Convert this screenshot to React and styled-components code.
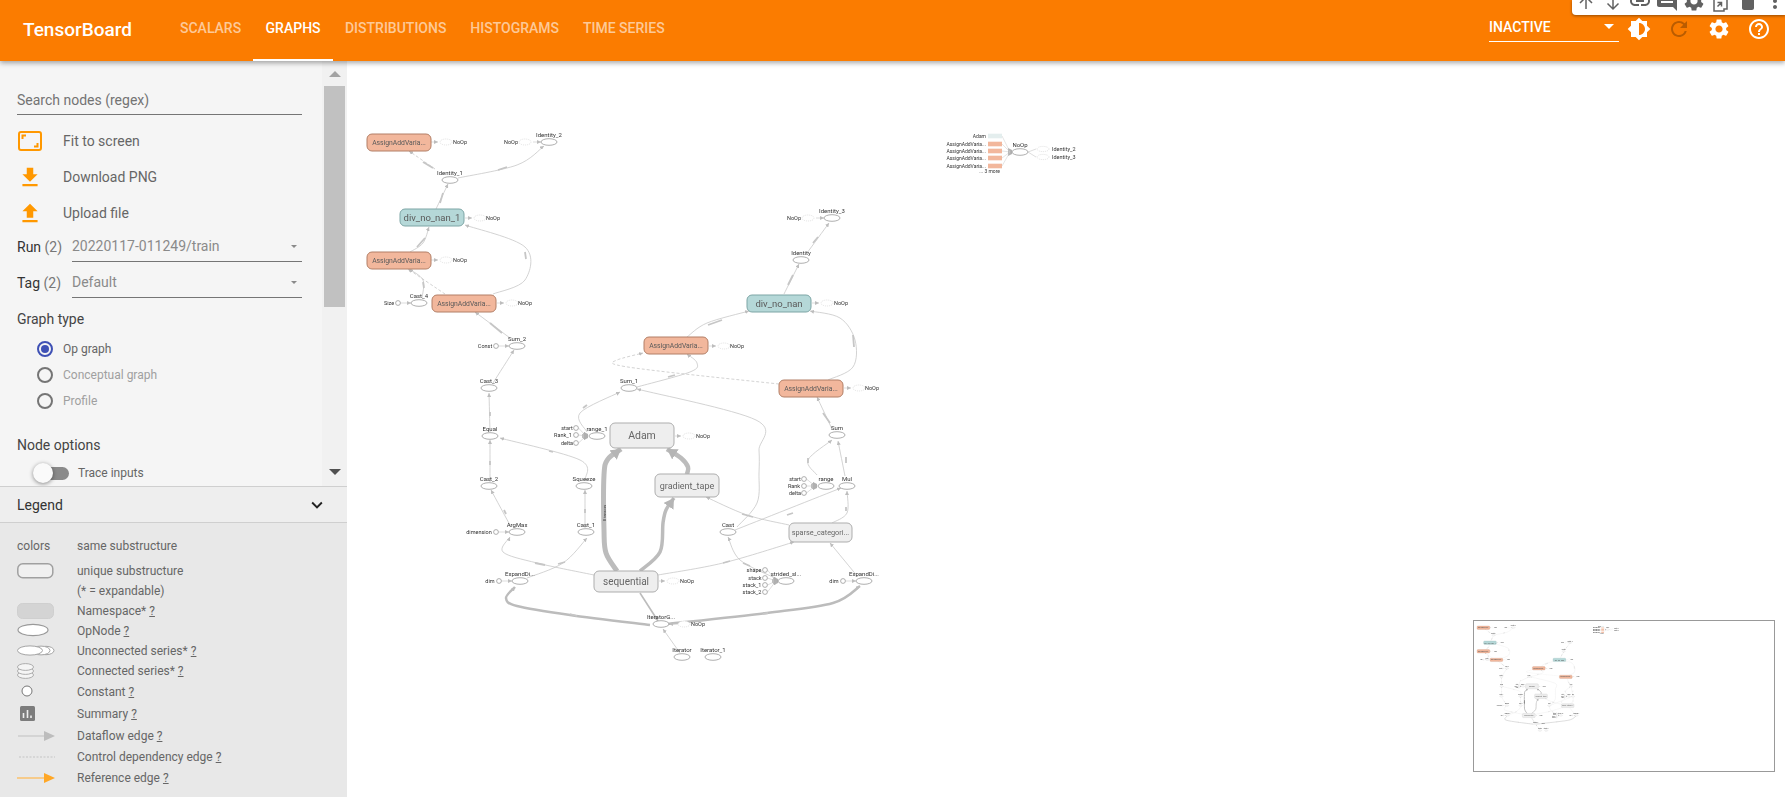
import React from 'react';
import styled, {createGlobalStyle} from 'styled-components';
import {
  MdLink, MdComment, MdSettings, MdDelete, MdMoreVert,
  MdBrightness6, MdRefresh, MdHelpOutline, MdFileDownload, MdFileUpload, MdKeyboardArrowDown,
} from 'react-icons/md';

const ORANGE = '#fb7c00';
const ICON_ORANGE = '#ff9800';

const GlobalStyle = createGlobalStyle`
  html, body {
    margin: 0;
    height: 100%;
    overflow: hidden;
    background: #fff;
    font-family: Roboto, "Liberation Sans", sans-serif;
  }
`;

const Page = styled.div`
  position: relative;
  display: flex;
  flex-direction: column;
  width: 1785px;
  height: 805px;
  overflow: hidden;
`;

/* ---------- header ---------- */

const Header = styled.header`
  position: relative;
  z-index: 2;
  display: flex;
  align-items: center;
  flex: none;
  height: 61px;
  padding: 0 6px 0 23px;
  background: ${ORANGE};
  box-shadow: 0 2px 5px rgba(0, 0, 0, 0.35);
  color: #fff;
`;

const Brand = styled.div`
  width: 145px;
  margin-bottom: 3px;
  font-size: 19px;
  font-weight: 500;
`;

const Tabs = styled.nav`
  display: flex;
  align-self: stretch;
  flex: 1;
`;

const Tab = styled.div`
  display: flex;
  align-items: center;
  box-sizing: border-box;
  padding: ${p => (p.$active ? '0 12.5px 3px' : '0 12px 3px')};
  margin-right: -0.1px;
  border-bottom: 2px solid ${p => (p.$active ? '#fff' : 'transparent')};
  color: ${p => (p.$active ? '#fff' : 'rgba(255, 255, 255, 0.6)')};
  font-size: 14px;
  font-weight: 500;
`;

const RunSelect = styled.div`
  display: flex;
  align-items: center;
  justify-content: space-between;
  box-sizing: border-box;
  width: 130px;
  height: 28px;
  margin-bottom: 6px;
  padding: 0 5px 1px 0;
  border-bottom: 1px solid #fff;
  font-size: 14px;
  font-weight: 500;
`;

const Caret = styled.span`
  width: 0;
  height: 0;
  border-left: ${p => p.$size || 5}px solid transparent;
  border-right: ${p => p.$size || 5}px solid transparent;
  border-top: ${p => p.$size || 5}px solid ${p => p.$color || '#fff'};
`;

const HeaderIcon = styled.div`
  display: flex;
  align-items: center;
  justify-content: center;
  width: 40px;
  margin-bottom: 3px;
  font-size: 24px;
  color: ${p => (p.$disabled ? 'rgba(0, 0, 0, 0.26)' : '#fff')};
`;

const CellToolbar = styled.div`
  position: absolute;
  z-index: 3;
  top: 0;
  right: 0;
  display: flex;
  box-sizing: border-box;
  width: 213px;
  height: 15px;
  padding-left: 1px;
  overflow: hidden;
  border-bottom-left-radius: 4px;
  background: #fff;
  box-shadow: 0 1px 3px rgba(0, 0, 0, 0.4);
`;

const CellTool = styled.div`
  display: flex;
  flex: none;
  justify-content: center;
  width: 26.9px;
  height: 24px;
  margin-top: -11px;
  font-size: 24px;
  color: #616161;
`;

/* ---------- sidebar ---------- */

const Main = styled.div`
  display: flex;
  flex: 1;
  min-height: 0;
`;

const Sidebar = styled.aside`
  display: flex;
  flex-direction: column;
  flex: none;
  width: 347px;
  height: 736px;
`;

const ScrollArea = styled.div`
  display: flex;
  flex: none;
  height: 425px;
  background: #f5f5f5;
`;

const Controls = styled.div`
  flex: 1;
  box-sizing: border-box;
  padding: 24px 20px 0 17px;
  overflow: hidden;
  color: #333;
  font-size: 14px;
`;

const Scrollbar = styled.div`
  display: flex;
  flex-direction: column;
  align-items: center;
  flex: none;
  box-sizing: border-box;
  width: 25px;
  padding: 0 2px;
  background: #f1f1f1;
`;

const ScrollCap = styled.div`
  display: flex;
  align-items: center;
  justify-content: center;
  flex: none;
  height: ${p => p.$height}px;
`;

const ScrollArrow = styled.span`
  width: 0;
  height: 0;
  border-left: 6px solid transparent;
  border-right: 6px solid transparent;
  ${p => (p.$up ? 'border-bottom: 6px solid #a3a3a3;' : 'border-top: 6px solid #505050;')}
`;

const ScrollThumb = styled.div`
  flex: none;
  width: 100%;
  height: 221px;
  background: #c1c1c1;
`;

const ScrollGap = styled.div`
  flex: 1;
`;

const SearchField = styled.div`
  display: flex;
  align-items: center;
  box-sizing: border-box;
  height: 30px;
  border-bottom: 1px solid #757575;
  color: #737373;
`;

const ActionList = styled.div`
  margin-top: 8px;
`;

const ActionRow = styled.div`
  display: flex;
  align-items: center;
  height: 36px;
  color: #666;
`;

const ActionIcon = styled.div`
  display: flex;
  align-items: center;
  justify-content: center;
  flex: none;
  width: 26px;
  margin-right: 20px;
  font-size: 27px;
  color: ${ICON_ORANGE};
`;

const SelectRow = styled.div`
  display: flex;
  align-items: center;
  height: 31px;
  margin-top: ${p => p.$gap}px;
`;

const SelectLabel = styled.div`
  flex: none;
  width: 55px;
  color: #333;
`;

const Count = styled.span`
  color: #777;
`;

const SelectBox = styled.div`
  display: flex;
  flex: 1;
  align-items: center;
  justify-content: space-between;
  align-self: stretch;
  padding-right: 5px;
  border-bottom: 1px solid #757575;
  color: #8a8a8a;
`;

const SectionTitle = styled.div`
  height: 20px;
  margin-top: ${p => p.$gap}px;
  line-height: 20px;
  color: #444;
`;

const RadioList = styled.div`
  margin-top: 7px;
  padding-left: 20px;
`;

const RadioRow = styled.div`
  display: flex;
  align-items: center;
  height: 26px;
  color: ${p => (p.$disabled ? '#a0a0a0' : '#666')};
  font-size: 12px;
`;

const RadioMark = styled.span`
  display: flex;
  align-items: center;
  justify-content: center;
  box-sizing: border-box;
  width: 16px;
  height: 16px;
  margin-right: 10px;
  border: 2px solid ${p => (p.$checked ? '#3f51b5' : '#757575')};
  border-radius: 50%;
  &::after {
    content: '';
    width: 8px;
    height: 8px;
    border-radius: 50%;
    background: ${p => (p.$checked ? '#3f51b5' : 'transparent')};
  }
`;

const ToggleRow = styled.div`
  display: flex;
  align-items: center;
  height: 26px;
  margin-top: 5px;
  padding-left: 16px;
  color: #666;
  font-size: 12px;
`;

const Toggle = styled.div`
  position: relative;
  flex: none;
  width: 33px;
  height: 13px;
  margin-right: 9px;
  margin-left: 3px;
  border-radius: 7px;
  background: #8a8a8a;
  &::before {
    content: '';
    position: absolute;
    top: -3.5px;
    left: -3px;
    width: 20px;
    height: 20px;
    border-radius: 50%;
    background: #fafafa;
    box-shadow: 0 1px 4px rgba(0, 0, 0, 0.45);
  }
`;

const LegendHead = styled.div`
  display: flex;
  align-items: center;
  justify-content: space-between;
  flex: none;
  box-sizing: border-box;
  height: 37px;
  padding: 0 19px 0 17px;
  border-top: 1px solid #cfcfcf;
  border-bottom: 1px solid #cfcfcf;
  background: #eee;
  color: #333;
  font-size: 14px;
  svg {
    font-size: 22px;
    color: #222;
  }
`;

const LegendBody = styled.div`
  flex: none;
  padding: 13px 0 9px 17px;
  background: #e8e8e8;
  color: #666;
  font-size: 12px;
`;

const LegendRow = styled.div`
  display: flex;
  align-items: center;
  height: 20px;
  margin-top: ${p => p.$gap || 0}px;
`;

const LegendKey = styled.div`
  display: flex;
  align-items: center;
  flex: none;
  width: 60px;
  height: 20px;
`;

const Hint = styled.span`
  margin-left: 3px;
  text-decoration: underline;
`;

/* ---------- graph ---------- */

const Canvas = styled.div`
  flex: 1;
  min-width: 0;
  background: #fff;
`;

const GraphSvg = styled.svg`
  display: block;
  filter: blur(0.3px);
`;

const Minimap = styled.div`
  position: absolute;
  z-index: 1;
  right: 10px;
  bottom: 33px;
  box-sizing: border-box;
  width: 302px;
  height: 152px;
  border: 1px solid #999;
  background: #fff;
`;

const MetaRect = styled.rect`
  rx: 5px;
  stroke-width: 1;
  fill: ${p => ({assign: '#f2b79c', div: '#b5d8d8', plain: '#eeeeee'}[p.$kind])};
  stroke: ${p => ({assign: '#b27f66', div: '#7da5a5', plain: '#adadad'}[p.$kind])};
`;

const MetaLabel = styled.text`
  fill: ${p => (p.$kind === 'plain' ? '#666' : '#5a5a5a')};
  font-family: Roboto, sans-serif;
  font-size: ${p => p.$size}px;
  text-anchor: middle;
  dominant-baseline: central;
`;

const OpEllipse = styled.ellipse`
  fill: #fff;
  stroke: #9a9a9a;
  stroke-width: 0.8;
`;

const AuxEllipse = styled.ellipse`
  fill: #fff;
  stroke: #d4d4d4;
  stroke-width: 0.7;
  stroke-dasharray: 1 1;
`;

const ConstDot = styled.circle`
  fill: #fff;
  stroke: #8e8e8e;
  stroke-width: 0.7;
`;

const TinyLabel = styled.text`
  fill: #333;
  font-family: Roboto, sans-serif;
  font-size: ${p => p.$size || 6}px;
  text-anchor: ${p => p.$anchor || 'middle'};
  dominant-baseline: central;
`;

const EdgePath = styled.path`
  fill: none;
  stroke: ${p => p.$color || '#c8c8c8'};
  stroke-width: ${p => p.$w || 0.8};
  stroke-dasharray: ${p => (p.$dash ? '3 2' : 'none')};
`;

const Blob = styled.line`
  stroke: #c6c6c6;
  stroke-width: 1.8;
`;

const smooth = pts => {
  let d = `M${pts[0][0]} ${pts[0][1]}`;
  for (let i = 0; i < pts.length - 1; i++) {
    const p0 = pts[i - 1] || pts[i];
    const p1 = pts[i];
    const p2 = pts[i + 1];
    const p3 = pts[i + 2] || p2;
    const c1 = [p1[0] + (p2[0] - p0[0]) / 6, p1[1] + (p2[1] - p0[1]) / 6];
    const c2 = [p2[0] - (p3[0] - p1[0]) / 6, p2[1] - (p3[1] - p1[1]) / 6];
    d += `C${c1[0]} ${c1[1]} ${c2[0]} ${c2[1]} ${p2[0]} ${p2[1]}`;
  }
  return d;
};

const metaNodes = [
  {x: 367, y: 134, w: 64, h: 17, kind: 'assign', size: 6.8, label: 'AssignAddVaria...'},
  {x: 367, y: 252, w: 64, h: 17, kind: 'assign', size: 6.8, label: 'AssignAddVaria...'},
  {x: 432, y: 295, w: 64, h: 17, kind: 'assign', size: 6.8, label: 'AssignAddVaria...'},
  {x: 644, y: 337, w: 64, h: 17, kind: 'assign', size: 6.8, label: 'AssignAddVaria...'},
  {x: 779, y: 380, w: 64, h: 17, kind: 'assign', size: 6.8, label: 'AssignAddVaria...'},
  {x: 400, y: 209, w: 64, h: 17, kind: 'div', size: 9.5, label: 'div_no_nan_1'},
  {x: 747, y: 295, w: 64, h: 17, kind: 'div', size: 9.5, label: 'div_no_nan'},
  {x: 610, y: 423, w: 64, h: 25, kind: 'plain', size: 10.5, label: 'Adam'},
  {x: 655, y: 474, w: 64, h: 23, kind: 'plain', size: 9, label: 'gradient_tape'},
  {x: 594, y: 571, w: 64, h: 21, kind: 'plain', size: 10, label: 'sequential'},
  {x: 789, y: 523, w: 63, h: 19, kind: 'plain', size: 7.3, label: 'sparse_categori...'},
];

const opNodes = [
  [549, 142, 'Identity_2'], [450, 180, 'Identity_1'], [419, 303, 'Cast_4'], [517, 346, 'Sum_2'],
  [489, 388, 'Cast_3'], [490, 436, 'Equal'], [489, 486, 'Cast_2'], [517, 532, 'ArgMax'],
  [584, 486, 'Squeeze'], [586, 532, 'Cast_1'], [520, 581, 'ExpandDi...'], [597, 436, 'range_1'],
  [629, 388, 'Sum_1'], [801, 260, 'Identity'], [832, 218, 'Identity_3'], [837, 435, 'Sum'],
  [826, 486, 'range'], [847, 486, 'Mul'], [728, 532, 'Cast'], [786, 581, 'strided_sl...'],
  [864, 581, 'ExpandDi...'], [661, 624, 'IteratorG...'], [682, 657, 'Iterator'], [713, 657, 'Iterator_1'],
  [1020, 152, 'NoOp'],
];

// x of the dotted stub's start and end, ellipse x, y, label x
const auxNodes = [
  [431, 438, 446, 142, 460], [533, 541, 525, 142, 511], [465, 472, 480, 218, 493],
  [431, 438, 446, 260, 460], [497, 504, 512, 303, 525], [709, 716, 724, 346, 737],
  [812, 819, 827, 303, 841], [844, 851, 859, 388, 872], [816, 824, 808, 218, 794],
  [675, 681, 689, 436, 703], [659, 665, 673, 581, 687], [680, 669, 684, 624, 698],
];

// circle x, y, label, label x, edge end x, edge end y
const constNodes = [
  [398, 303, 'Size', 389, 411, 303], [496, 346, 'Const', 485, 509, 346], [496, 532, 'dimension', 479, 509, 532],
  [499, 581, 'dim', 490, 512, 581], [843, 581, 'dim', 834, 856, 581],
  [576, 428, 'start', 567, 586, 436], [576, 435, 'Rank_1', 563, 586, 436], [576, 443, 'delta', 567, 586, 436],
  [804, 479, 'start', 795, 815, 486], [804, 486, 'Rank', 794, 815, 486], [804, 493, 'delta', 795, 815, 486],
  [765, 570, 'shape', 754, 776, 581], [765, 578, 'stack', 755, 776, 581],
  [765, 585, 'stack_1', 752, 776, 581], [765, 592, 'stack_2', 752, 776, 581],
];

const edges = [
  {pts: [[617, 571], [606, 553], [604, 530], [604, 475], [608, 459], [621, 449]], w: 5, big: true},
  {pts: [[640, 571], [660, 552], [663, 523], [666, 510], [674, 498]], w: 3.5, big: true},
  {pts: [[687, 474], [688, 467], [681, 458], [667, 449]], w: 4.5, big: true},
  {pts: [[650, 625], [570, 615], [517, 606], [506, 598], [515, 587]], w: 2.5},
  {pts: [[668, 624], [767, 613], [833, 603], [860, 586]], w: 2.5},
  {pts: [[640, 593], [658, 621]], w: 1.6},
  {pts: [[680, 653], [663, 629]]},
  {pts: [[594, 575], [537, 563], [503, 552], [510, 537]]},
  {pts: [[527, 578], [563, 563], [587, 538]]},
  {pts: [[511, 527], [491, 490]]},
  {pts: [[490, 482], [490, 440]]},
  {pts: [[490, 432], [489, 393]]},
  {pts: [[585, 480], [580, 460], [500, 438]]},
  {pts: [[585, 528], [585, 490]]},
  {pts: [[493, 383], [514, 350]]},
  {pts: [[510, 338], [475, 312]]},
  {pts: [[493, 294], [525, 280], [525, 247], [465, 225]]},
  {pts: [[445, 294], [408, 269]], dash: true},
  {pts: [[422, 298], [423, 280], [409, 269]]},
  {pts: [[410, 252], [423, 243], [429, 227]]},
  {pts: [[436, 209], [448, 184]]},
  {pts: [[435, 169], [409, 151]], dash: true},
  {pts: [[458, 178], [517, 165], [544, 146]]},
  {pts: [[637, 387], [690, 372], [697, 363], [687, 354]]},
  {pts: [[687, 337], [707, 323], [749, 311]]},
  {pts: [[779, 384], [667, 372], [617, 365], [617, 360], [643, 353]], dash: true},
  {pts: [[828, 380], [853, 367], [855, 340], [840, 318], [810, 311]]},
  {pts: [[784, 294], [799, 264]]},
  {pts: [[807, 253], [829, 223]]},
  {pts: [[832, 429], [817, 397]]},
  {pts: [[845, 476], [838, 441]]},
  {pts: [[817, 475], [808, 460], [832, 440]]},
  {pts: [[832, 523], [847, 513], [847, 491]]},
  {pts: [[735, 530], [841, 488]]},
  {pts: [[737, 527], [757, 503], [759, 473], [759, 450], [756, 420], [637, 389]]},
  {pts: [[789, 525], [747, 515], [706, 497]]},
  {pts: [[658, 575], [723, 563], [794, 542]]},
  {pts: [[775, 578], [740, 560], [728, 537]]},
  {pts: [[858, 577], [830, 543]]},
  {pts: [[587, 432], [580, 413], [620, 392]]},
];

const blobs = [
  [423, 162, 433, 168], [498, 170, 507, 167], [440, 203, 443, 193], [417, 247, 425, 238],
  [525, 252, 526, 259], [423, 282, 424, 288], [490, 323, 502, 333], [490, 412, 490, 416],
  [490, 461, 490, 465], [549, 451, 553, 452], [504, 510, 506, 514], [585, 509, 585, 513],
  [535, 563, 545, 565], [558, 564, 565, 562], [583, 408, 587, 405], [708, 325, 722, 320],
  [853, 335, 854, 347], [813, 243, 818, 237], [788, 285, 793, 275], [668, 377, 675, 375],
  [823, 413, 830, 423], [808, 458, 808, 463], [846, 457, 846, 463], [846, 507, 846, 511],
  [787, 515, 793, 513], [742, 514, 753, 517], [723, 563, 730, 561], [743, 563, 750, 566],
  [763, 614, 768, 613], [570, 614, 577, 616],
];

const funnels = [[586, 436], [815, 486], [776, 581], [1010, 152]];

const Markers = ({id}) => (
  <defs>
    <marker id={`${id}-sm`} markerUnits='userSpaceOnUse' markerWidth='5' markerHeight='4' refX='4' refY='2' orient='auto'>
      <path d='M0 0L4 2L0 4z' fill='#bdbdbd' />
    </marker>
    <marker id={`${id}-lg`} markerUnits='userSpaceOnUse' markerWidth='12' markerHeight='12' refX='10' refY='6' orient='auto'>
      <path d='M0 0L10 6L0 12z' fill='#b5b5b5' />
    </marker>
  </defs>
);

const Graph = ({id}) => (
  <g>
    <Markers id={id} />
    {edges.map((e, i) => (
      <EdgePath
        key={i}
        d={smooth(e.pts)}
        $w={e.w}
        $dash={e.dash}
        $color={e.w ? '#bcbcbc' : undefined}
        markerEnd={`url(#${id}-${e.big ? 'lg' : 'sm'})`}
      />
    ))}
    {blobs.map((b, i) => <Blob key={i} x1={b[0]} y1={b[1]} x2={b[2]} y2={b[3]} />)}
    <TinyLabel $size={4} transform='translate(604 513) rotate(-90)'>8 tensors</TinyLabel>

    {constNodes.map(([cx, cy, label, lx, ex, ey], i) => (
      <g key={i}>
        <EdgePath d={`M${cx + 2.5} ${cy}L${ex} ${ey}`} $w={0.6} markerEnd={`url(#${id}-sm)`} />
        <ConstDot cx={cx} cy={cy} r='2.4' />
        <TinyLabel x={lx} y={cy} $size={5.5}>{label}</TinyLabel>
      </g>
    ))}
    {funnels.map(([x, y], i) => <path key={i} d={`M${x - 2} ${y - 4}L${x + 2} ${y - 2}V${y + 2}L${x - 2} ${y + 4}z`} fill='#b0b0b0' />)}

    {auxNodes.map(([x1, x2, ex, y, lx], i) => (
      <g key={i}>
        <EdgePath d={`M${x1} ${y}L${x2} ${y}`} $w={0.6} markerEnd={`url(#${id}-sm)`} />
        <AuxEllipse cx={ex} cy={y} rx='6' ry='3' />
        <TinyLabel x={lx} y={y} $size={5.5}>NoOp</TinyLabel>
      </g>
    ))}

    {opNodes.map(([cx, cy, label], i) => (
      <g key={i}>
        <OpEllipse cx={cx} cy={cy} rx='8' ry='3.3' />
        <TinyLabel x={cx} y={cy - 8}>{label}</TinyLabel>
      </g>
    ))}

    {metaNodes.map((n, i) => (
      <g key={i}>
        <MetaRect x={n.x} y={n.y} width={n.w} height={n.h} $kind={n.kind} />
        <MetaLabel x={n.x + n.w / 2} y={n.y + n.h / 2} $size={n.size} $kind={n.kind}>{n.label}</MetaLabel>
      </g>
    ))}

    {/* isolated Adam dependency group on the right */}
    {[['Adam', 136, '#e4eeee'], ['AssignAddVaria...', 144, '#f2b79c'], ['AssignAddVaria...', 151, '#f2b79c'], ['AssignAddVaria...', 158, '#f2b79c'], ['AssignAddVaria...', 166, '#f2b79c']].map(([label, y, fill], i) => (
      <g key={i}>
        <EdgePath d={`M1002 ${y}L1010 152`} $w={0.5} />
        <rect x='988' y={y - 2.3} width='14' height='4.6' fill={fill} />
        <TinyLabel x='986' y={y} $size={5} $anchor='end'>{label}</TinyLabel>
      </g>
    ))}
    <TinyLabel x='1000' y='171' $size={5} $anchor='end'>... 3 more</TinyLabel>
    <EdgePath d='M1028 152L1036 149M1028 152L1036 157' $w={0.6} />
    <AuxEllipse cx='1043' cy='149' rx='6' ry='2.6' />
    <AuxEllipse cx='1043' cy='157' rx='6' ry='2.6' />
    <TinyLabel x='1052' y='149' $size={5.5} $anchor='start'>Identity_2</TinyLabel>
    <TinyLabel x='1052' y='157' $size={5.5} $anchor='start'>Identity_3</TinyLabel>
  </g>
);

/* ---------- small drawings ---------- */

const FitIcon = () => (
  <svg width='26' height='22' viewBox='0 0 26 22'>
    <rect x='2' y='2' width='22' height='18' rx='2' fill='none' stroke={ICON_ORANGE} strokeWidth='2' />
    <path d='M5.5 9V5.5H9M20.5 13v3.5H17' fill='none' stroke={ICON_ORANGE} strokeWidth='2' />
  </svg>
);

const ToolSvg = ({children}) => (
  <svg width='24' height='24' viewBox='0 0 24 24' fill='none' stroke='#616161' strokeWidth='1.5'>{children}</svg>
);

const legendRows = [
  {text: 'colors', label: 'same substructure'},
  {gap: 5, text: '', label: 'unique substructure', key: <rect x='0.8' y='2.8' width='35' height='14' rx='5' fill='#f0f0f0' stroke='#a0a0a0' strokeWidth='1.5' />},
  {text: '', label: '(* = expandable)'},
  {label: 'Namespace*', hint: true, key: <rect x='0.5' y='2.5' width='36' height='15' rx='5' fill='#d4d4d4' stroke='#cfcfcf' />},
  {label: 'OpNode', hint: true, key: <ellipse cx='16' cy='9' rx='15' ry='5.6' fill='#fff' stroke='#999' strokeWidth='1.2' />},
  {label: 'Unconnected series*', hint: true, key: (
    <g fill='#fff' stroke='#a5a5a5'>
      <ellipse cx='29' cy='9.5' rx='8' ry='4.2' />
      <ellipse cx='24' cy='9.5' rx='9' ry='4.4' />
      <ellipse cx='13' cy='9.5' rx='12.5' ry='4.6' />
    </g>
  )},
  {label: 'Connected series*', hint: true, key: (
    <g fill='#f5f5f5' stroke='#a5a5a5' strokeWidth='0.9'>
      <ellipse cx='8.5' cy='14' rx='8' ry='3.4' />
      <ellipse cx='8.5' cy='10' rx='8' ry='3.4' />
      <ellipse cx='8.5' cy='6' rx='8' ry='3.4' />
    </g>
  )},
  {gap: 1, label: 'Constant', hint: true, key: <circle cx='10' cy='9' r='5' fill='#fff' stroke='#777' />},
  {gap: 2, label: 'Summary', hint: true, key: (
    <g>
      <rect x='3' y='2' width='15' height='15' rx='1.5' fill='#7c7c7c' />
      <path d='M6.5 9v5M10.5 6v8M14 11.5V14' stroke='#eee' strokeWidth='1.6' />
    </g>
  )},
  {gap: 2, label: 'Dataflow edge', hint: true, key: <g><path d='M1 10H30' stroke='#c0c0c0' /><path d='M27 5L38 10L27 15z' fill='#bdbdbd' /></g>},
  {gap: 1, label: 'Control dependency edge', hint: true, key: <path d='M2 10H38' stroke='#c4c4c4' strokeDasharray='2 1.5' />},
  {gap: 1, label: 'Reference edge', hint: true, key: <g><path d='M0 10H30' stroke='#ffb74d' strokeWidth='1.2' /><path d='M27 5L38 10L27 15z' fill='#ffa726' /></g>},
];

const tabs = ['SCALARS', 'GRAPHS', 'DISTRIBUTIONS', 'HISTOGRAMS', 'TIME SERIES'];

const App = () => (
  <Page>
    <GlobalStyle />
    <CellToolbar>
      <CellTool><ToolSvg><path d='M12 20V8M6 14l6-6 6 6' /></ToolSvg></CellTool>
      <CellTool><ToolSvg><path d='M12 4v16M6.5 14.5L12 20l5.5-5.5' /></ToolSvg></CellTool>
      <CellTool><MdLink /></CellTool>
      <CellTool><MdComment /></CellTool>
      <CellTool><MdSettings /></CellTool>
      <CellTool><ToolSvg><path d='M8 3v5H5v14h10v-2h3V3M8.5 13.5h4v4M8.5 17.5l4-4' /></ToolSvg></CellTool>
      <CellTool><MdDelete /></CellTool>
      <CellTool><MdMoreVert /></CellTool>
    </CellToolbar>
    <Header>
      <Brand>TensorBoard</Brand>
      <Tabs>
        {tabs.map(t => <Tab key={t} $active={t === 'GRAPHS'}>{t}</Tab>)}
      </Tabs>
      <RunSelect>
        INACTIVE
        <Caret />
      </RunSelect>
      <HeaderIcon><MdBrightness6 /></HeaderIcon>
      <HeaderIcon $disabled><MdRefresh /></HeaderIcon>
      <HeaderIcon><MdSettings /></HeaderIcon>
      <HeaderIcon><MdHelpOutline /></HeaderIcon>
    </Header>
    <Main>
      <Sidebar>
        <ScrollArea>
          <Controls>
            <SearchField>Search nodes (regex)</SearchField>
            <ActionList>
              <ActionRow><ActionIcon><FitIcon /></ActionIcon>Fit to screen</ActionRow>
              <ActionRow><ActionIcon><MdFileDownload /></ActionIcon>Download PNG</ActionRow>
              <ActionRow><ActionIcon><MdFileUpload /></ActionIcon>Upload file</ActionRow>
            </ActionList>
            <SelectRow $gap={0}>
              <SelectLabel>Run <Count>(2)</Count></SelectLabel>
              <SelectBox>20220117-011249/train<Caret $size={3.5} $color='#8a8a8a' /></SelectBox>
            </SelectRow>
            <SelectRow $gap={5}>
              <SelectLabel>Tag <Count>(2)</Count></SelectLabel>
              <SelectBox>Default<Caret $size={3.5} $color='#8a8a8a' /></SelectBox>
            </SelectRow>
            <SectionTitle $gap={11}>Graph type</SectionTitle>
            <RadioList>
              <RadioRow><RadioMark $checked />Op graph</RadioRow>
              <RadioRow $disabled><RadioMark />Conceptual graph</RadioRow>
              <RadioRow $disabled><RadioMark />Profile</RadioRow>
            </RadioList>
            <SectionTitle $gap={21}>Node options</SectionTitle>
            <ToggleRow><Toggle />Trace inputs</ToggleRow>
          </Controls>
          <Scrollbar>
            <ScrollCap $height={25}><ScrollArrow $up /></ScrollCap>
            <ScrollThumb />
            <ScrollGap />
            <ScrollCap $height={28}><ScrollArrow /></ScrollCap>
          </Scrollbar>
        </ScrollArea>
        <LegendHead>Legend<MdKeyboardArrowDown /></LegendHead>
        <LegendBody>
          {legendRows.map(r => (
            <LegendRow key={r.label} $gap={r.gap}>
              <LegendKey>{r.text || (r.key && <svg width='40' height='20' viewBox='0 0 40 20'>{r.key}</svg>)}</LegendKey>
              <span>{r.label}</span>
              {r.hint && <Hint>?</Hint>}
            </LegendRow>
          ))}
        </LegendBody>
      </Sidebar>
      <Canvas>
        <GraphSvg width='1438' height='744' viewBox='347 61 1438 744'>
          <Graph id='main' />
        </GraphSvg>
      </Canvas>
    </Main>
    <Minimap>
      <GraphSvg width='300' height='150' viewBox='352 109 1500 750'>
        <Graph id='mini' />
      </GraphSvg>
    </Minimap>
  </Page>
);

export default App;
